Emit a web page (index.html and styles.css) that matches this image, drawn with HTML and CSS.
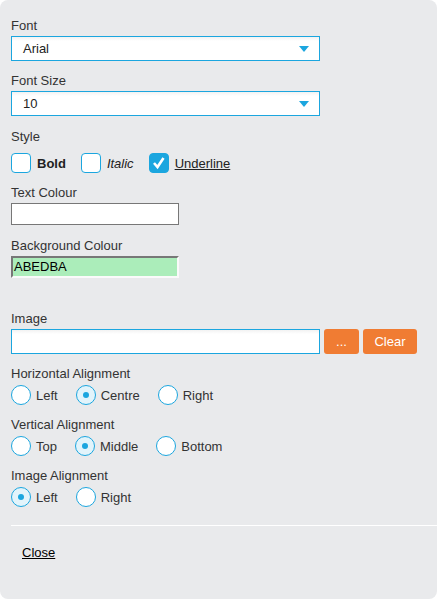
FILE: index.html
```html
<!DOCTYPE html>
<html lang="en">
<head>
  <meta charset="UTF-8" />
  <title>Cell Format</title>
  <link rel="stylesheet" href="styles.css">
</head>
<body>

<div class="panel">
  <div class="field first">
    <label class="lbl">Font</label>
    <div class="select"><span>Arial</span><i class="arrow"></i></div>
  </div>

  <div class="field">
    <label class="lbl">Font Size</label>
    <div class="select"><span>10</span><i class="arrow"></i></div>
  </div>

  <div class="field gap13">
    <label class="lbl">Style</label>
    <div class="checks">
      <span class="opt"><span class="box"></span><b>Bold</b></span>
      <span class="opt"><span class="box"></span><i>Italic</i></span>
      <span class="opt"><span class="box on">
        <svg width="20" height="20" viewBox="0 0 20 20"><path d="M5 10 L8.5 14 L14.5 5" fill="none" stroke="#fff" stroke-width="2.6"/></svg>
      </span><u>Underline</u></span>
    </div>
  </div>

  <div class="field">
    <label class="lbl">Text Colour</label>
    <div class="colour"></div>
  </div>

  <div class="field gap13">
    <label class="lbl">Background Colour</label>
    <div class="colour green">ABEDBA</div>
  </div>

  <div class="field image">
    <label class="lbl">Image</label>
    <div class="imgrow">
      <div class="imginput"></div>
      <button class="btn dots">...</button>
      <button class="btn clear">Clear</button>
    </div>
  </div>

  <div class="field">
    <label class="lbl">Horizontal Alignment</label>
    <div class="radios">
      <span class="opt"><span class="radio"></span>Left</span>
      <span class="opt"><span class="radio on"></span>Centre</span>
      <span class="opt"><span class="radio"></span>Right</span>
    </div>
  </div>

  <div class="field">
    <label class="lbl">Vertical Alignment</label>
    <div class="radios">
      <span class="opt"><span class="radio"></span>Top</span>
      <span class="opt"><span class="radio on"></span>Middle</span>
      <span class="opt"><span class="radio"></span>Bottom</span>
    </div>
  </div>

  <div class="field">
    <label class="lbl">Image Alignment</label>
    <div class="radios">
      <span class="opt"><span class="radio on"></span>Left</span>
      <span class="opt"><span class="radio"></span>Right</span>
    </div>
  </div>

  <hr class="sep">
  <a class="close" href="#">Close</a>
</div>

</body>
</html>
```

FILE: styles.css
```css
body { margin: 0; background: #fff; font-family: "Liberation Sans", Arial, sans-serif; font-size: 13px; line-height: 15px; color: #333; }
.panel { background: #e9eaec; border-radius: 8px; height: 599px; box-sizing: border-box; padding: 18px 0 0 11px; }
.field { margin-top: 12px; }
.field.first { margin-top: 0; }
.field.gap13 { margin-top: 13px; }
.field.image { margin-top: 33px; }
.lbl { display: block; line-height: 15px; margin-bottom: 3px; }
.select { width: 309px; height: 25px; box-sizing: border-box; border: 1px solid #1ba6df; background: linear-gradient(#f2f2f2, #fff 4px); display: flex; align-items: center; justify-content: space-between; padding: 0 10px 0 11px; color: #222; }
.arrow { width: 0; height: 0; border-left: 5px solid transparent; border-right: 5px solid transparent; border-top: 6px solid #1ba6df; }
.checks { display: flex; gap: 15px; margin-top: 9px; }
.checks .opt { display: flex; align-items: center; gap: 6px; color: #222; }
.box { width: 20px; height: 20px; box-sizing: border-box; border: 1.5px solid #1ba6df; border-radius: 4px; background: #fff; display: flex; align-items: center; justify-content: center; }
.box.on { background: #1ba6df; }
.box svg { flex: none; }
.colour { width: 168px; height: 22px; box-sizing: border-box; border: 1px solid #777; background: #fff; }
.colour.green { background: #abedba; border: 2px solid; border-color: #777 #fafafa #fafafa #777; color: #000; line-height: 17px; padding-left: 1px; }
.imgrow { display: flex; gap: 4px; }
.imginput { width: 309px; height: 25px; box-sizing: border-box; border: 1px solid #1ba6df; background: linear-gradient(#f2f2f2, #fff 4px); }
.btn { height: 25px; border: none; border-radius: 3px; background: #f07c33; color: #fff; font-family: inherit; font-size: 13px; padding: 0; }
.dots { width: 35px; }
.clear { width: 54px; }
.radios { display: flex; gap: 18px; margin-top: 4px; }
.radios .opt { display: flex; align-items: center; gap: 5px; }
.radio { width: 20px; height: 20px; box-sizing: border-box; border: 1.5px solid #1ba6df; border-radius: 50%; background: #fff; display: flex; align-items: center; justify-content: center; }
.radio.on { background: #e2f4fb; }
.radio.on::after { content: ""; width: 6px; height: 6px; border-radius: 50%; background: #1ba6df; }
.sep { border: none; border-top: 1px solid #fff; margin: 18px 0 0; }
.close { display: inline-block; margin: 19px 0 0 11px; color: #000; text-decoration: underline; }
```
